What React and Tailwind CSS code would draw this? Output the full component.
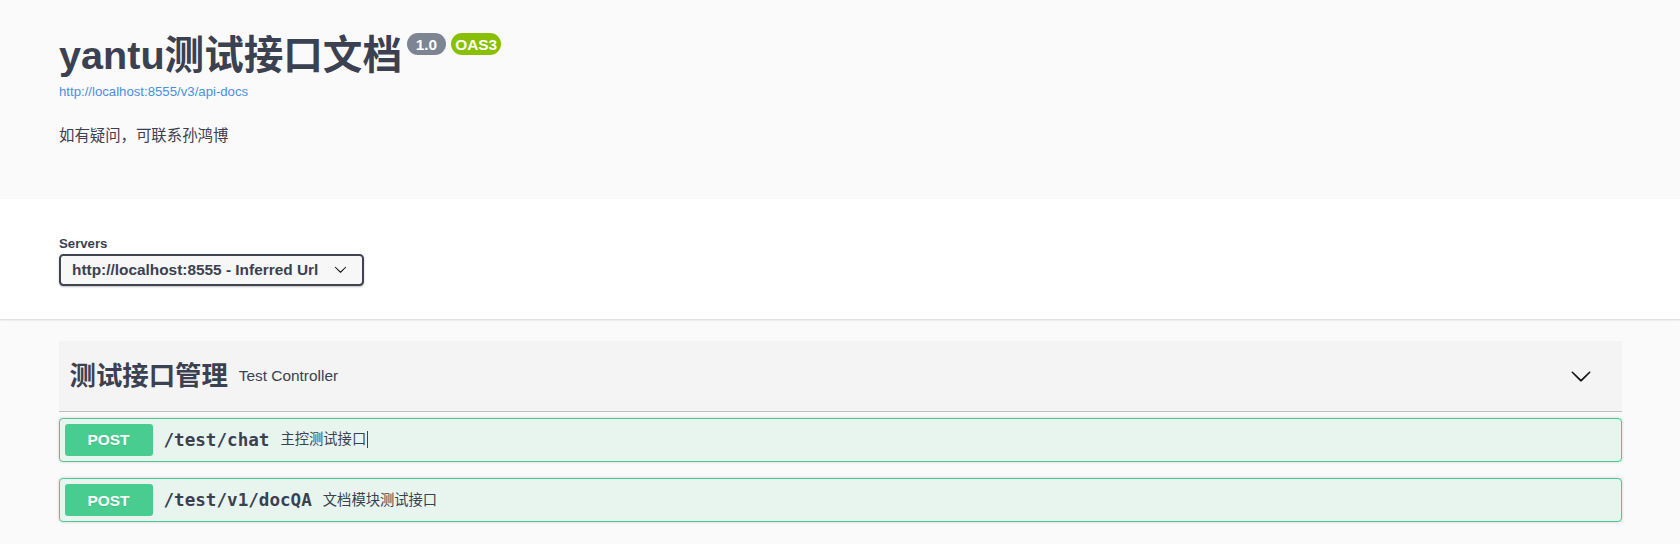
import React from 'react';

const ops = [
  { method: 'POST', path: '/test/chat', summary: '主控测试接口', caret: true },
  { method: 'POST', path: '/test/v1/docQA', summary: '文档模块测试接口' },
];

function Chevron({ className }) {
  return (
    <svg className={className} viewBox="0 0 20 20" fill="currentColor" aria-hidden="true">
      <path d="M17.418 6.109c.272-.268.709-.268.979 0s.271.701 0 .969l-7.908 7.83c-.27.268-.707.268-.979 0l-7.908-7.83c-.27-.268-.27-.701 0-.969.271-.268.709-.268.979 0L10 13.25l7.418-7.141z" />
    </svg>
  );
}

function OpBlock({ op }) {
  return (
    <div className="mb-[16.5px] rounded-[4px] border border-[#49cc90] bg-[#e8f5ef] shadow-[0_0_3px_rgba(0,0,0,0.19)]">
      <div className="flex items-center p-[5px]">
        <span className="flex h-[32px] w-[88px] items-center justify-center rounded-[3px] bg-[#49cc90] text-[15.4px] font-bold text-white [text-shadow:0_1px_0_rgba(0,0,0,0.1)]">
          {op.method}
        </span>
        <span className="px-[11px] font-['DejaVu_Sans_Mono',monospace] text-[17.6px] font-bold text-[#3b4151]">
          {op.path}
        </span>
        <span className="flex items-center text-[14.3px] text-[#3b4151]">
          {op.summary}
          {op.caret && <span className="ml-px inline-block h-[17px] w-px bg-[#3b4151]" />}
        </span>
      </div>
    </div>
  );
}

export default function App() {
  return (
    <div className="min-h-screen bg-[#fafafa] font-['Liberation_Sans','Noto_Sans_CJK_SC',sans-serif] text-[#3b4151]">
      {/* info */}
      <div className="px-[59px] pt-[31.6px] pb-[52px]">
        <div className="flex items-start">
          <h2 className="text-[39.6px] font-bold leading-[46px] text-[#3b4151]">yantu测试接口文档</h2>
          <div className="mt-[1.5px] ml-[5px] flex gap-[5px]">
            <span className="flex h-[22px] items-center rounded-full bg-[#7d8492] px-[4.4px] text-[15.4px] font-bold whitespace-pre text-white">{' 1.0 '}</span>
            <span className="flex h-[22px] items-center rounded-full bg-[#89bf04] px-[4.4px] text-[15.4px] font-bold text-white">OAS3</span>
          </div>
        </div>
        <a className="mt-[6px] block text-[13.2px] leading-[15.2px] text-[#4990e2]">http://localhost:8555/v3/api-docs</a>
        <p className="mt-[26px] text-[15.4px] leading-[22px]">如有疑问，可联系孙鸿博</p>
      </div>

      {/* servers */}
      <div className="bg-white px-[59px] pt-[37.5px] pb-[33px] shadow-[0_1px_2px_0_rgba(0,0,0,0.15)]">
        <span className="block text-[13.2px] font-bold leading-[15px]">Servers</span>
        <div className="mt-[2.5px] flex h-[32px] w-[305px] items-center justify-between rounded-[4.4px] border-[2.2px] border-[#41444e] bg-[#f7f7f7] pl-[11px] pr-[15px] shadow-[0_1px_2px_0_rgba(0,0,0,0.25)]">
          <span className="text-[15.4px] font-bold">http://localhost:8555 - Inferred Url</span>
          <Chevron className="h-[13px] w-[13px] text-black" />
        </div>
      </div>

      {/* operations */}
      <div className="px-[58.5px] pt-[22px]">
        <div className="mb-[6px] flex items-center border-b border-[#bdbfc4] bg-[#f4f4f4] py-[11px] pl-[11px] pr-[29.5px]">
          <h3 className="text-[26.4px] font-bold leading-[48px]">测试接口管理</h3>
          <span className="px-[11px] text-[15.4px]">Test Controller</span>
          <Chevron className="ml-auto h-[22px] w-[22px] text-[#111]" />
        </div>
        {ops.map((op) => (
          <OpBlock key={op.path} op={op} />
        ))}
      </div>
    </div>
  );
}
